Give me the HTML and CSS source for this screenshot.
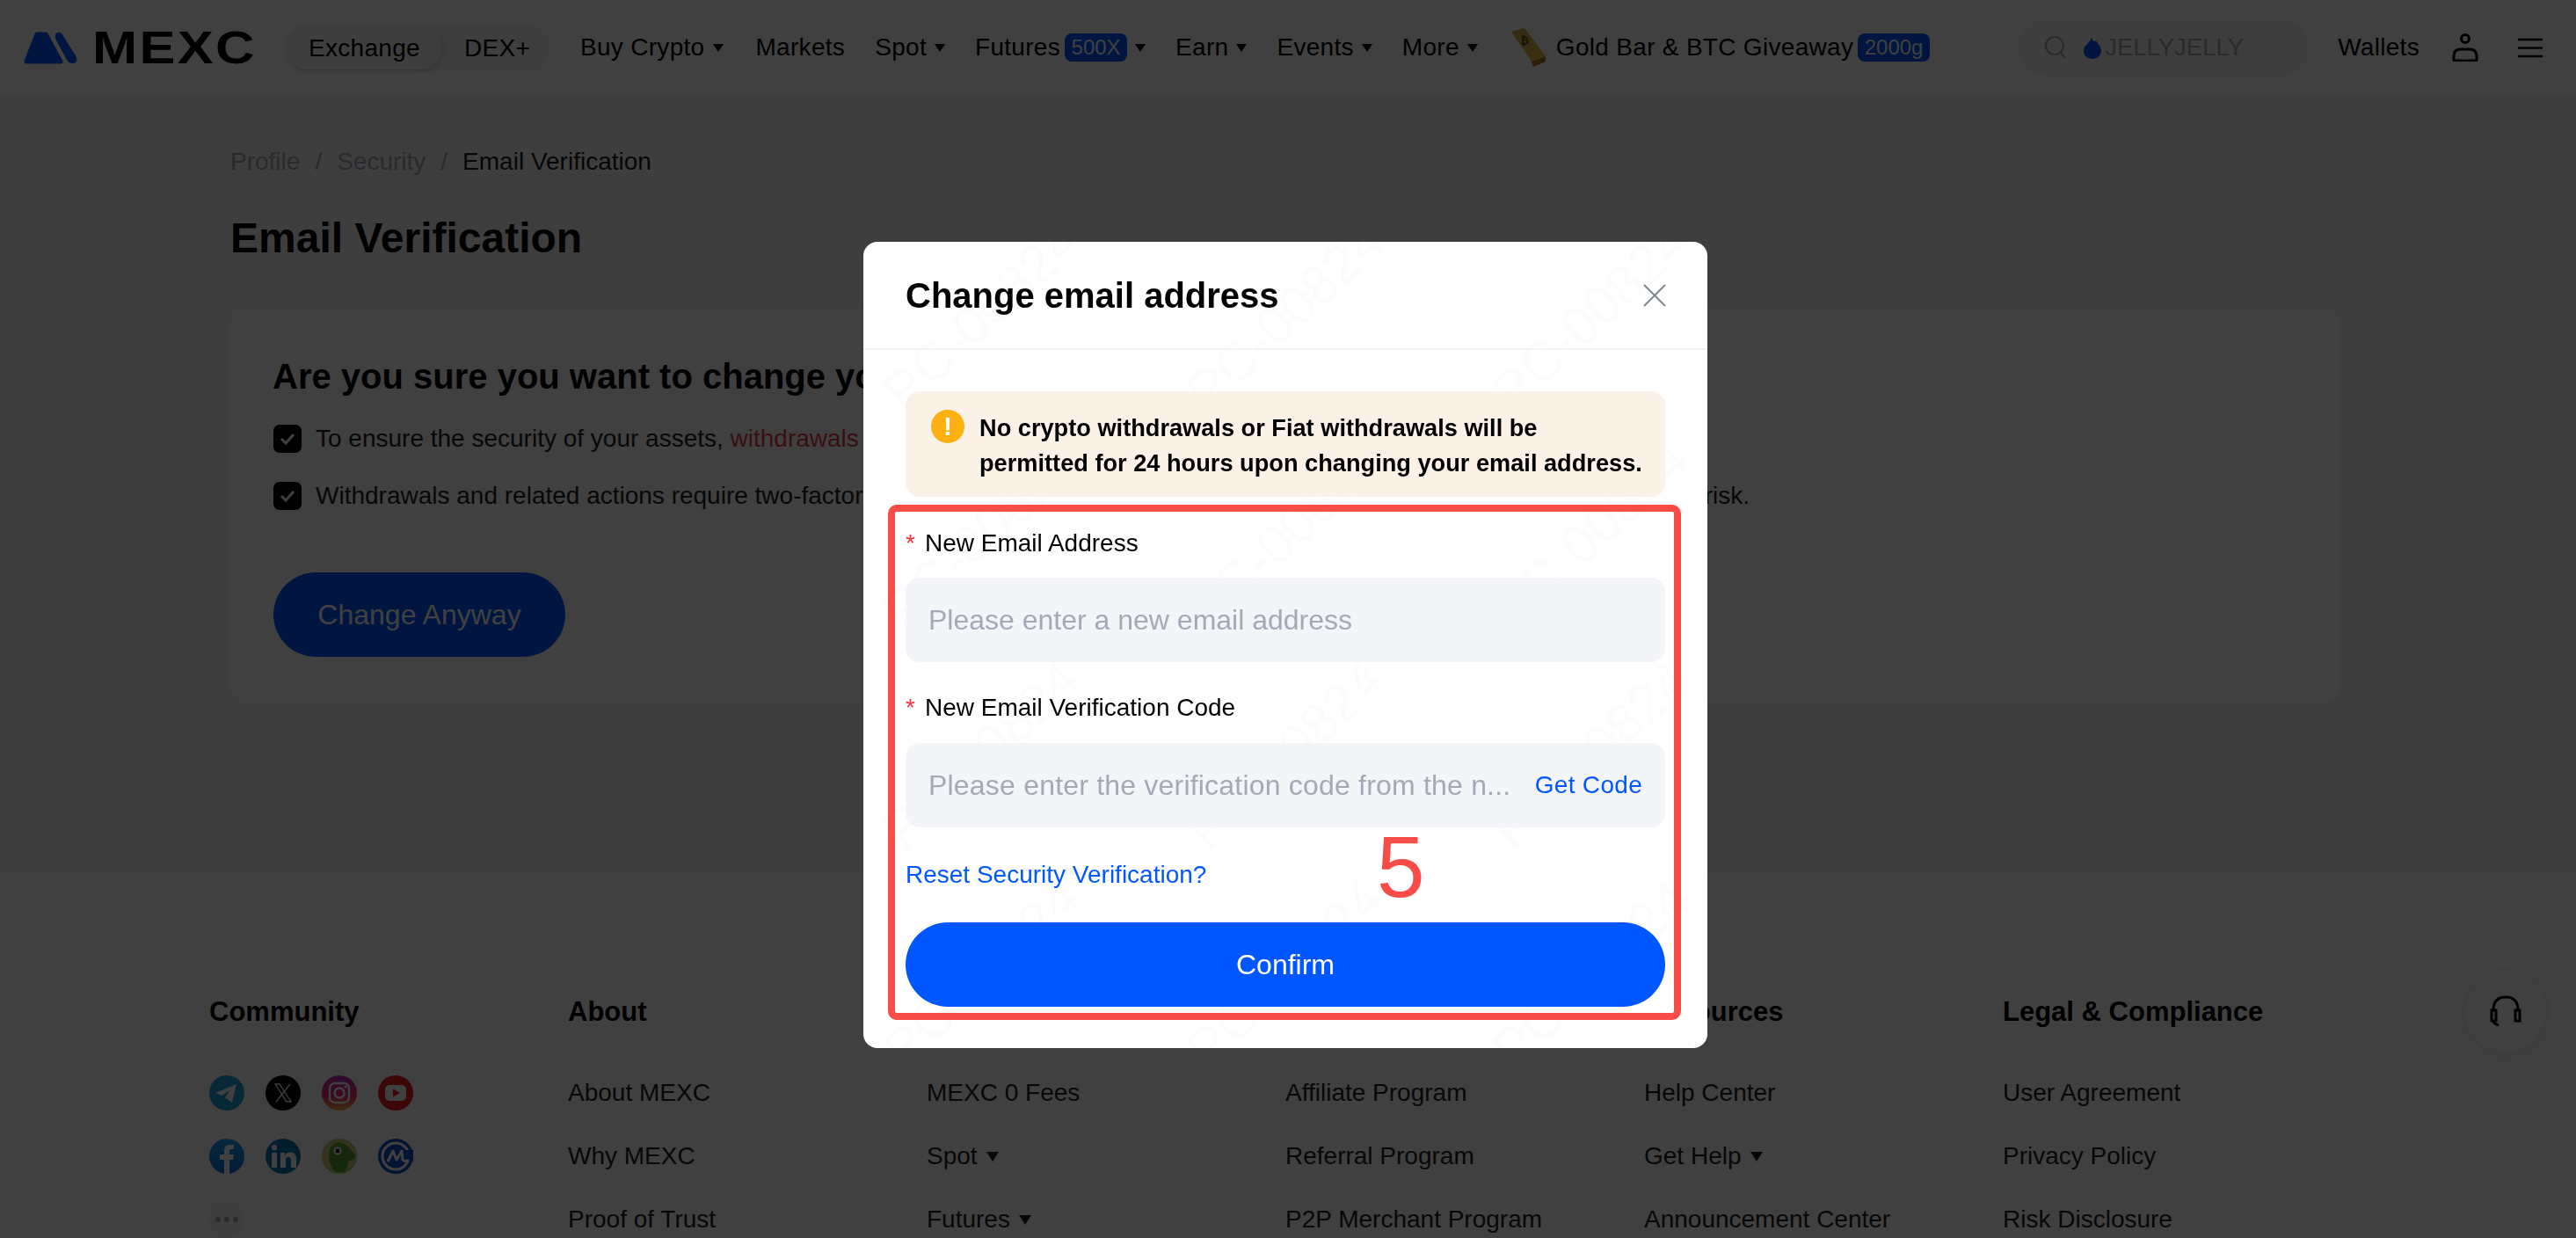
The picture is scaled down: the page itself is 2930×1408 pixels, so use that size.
FILE: index.html
```html
<!DOCTYPE html>
<html lang="en">
<head>
  <meta charset="UTF-8">
  <meta name="viewport" content="width=device-width, initial-scale=1.0">
  <title>Email Verification</title>
  <link rel="stylesheet" href="styles.css">
</head>
<body>
  <header class="topbar">
    <div class="logo">
      <svg class="logo-mark" viewBox="0 0 62 38">
        <path d="M4 35 L16 4 H26 L43 35 Z" fill="#0056ff" stroke="#0056ff" stroke-width="5" stroke-linejoin="round"/>
        <path d="M37 4 Q40 0 44 3 L61 30 Q63 37 56 37 Q52 37 50 33 L37 9 Z" fill="#0056ff"/>
      </svg>
      <span class="logo-text">MEXC</span>
    </div>
    <div class="mode-switch">
      <span class="mode active">Exchange</span>
      <span class="mode">DEX+</span>
    </div>
    <nav class="nav">
      <a>Buy Crypto<i class="caret"></i></a>
      <a>Markets</a>
      <a>Spot<i class="caret"></i></a>
      <a>Futures<b class="tag">500X</b><i class="caret"></i></a>
      <a>Earn<i class="caret"></i></a>
      <a>Events<i class="caret"></i></a>
      <a>More<i class="caret"></i></a>
      <a class="promo">
        <svg class="gold-bar" viewBox="0 0 42 44">
          <defs>
            <linearGradient id="gold" x1="0" y1="0" x2="0" y2="1">
              <stop offset="0" stop-color="#c9a94e"/>
              <stop offset="1" stop-color="#f0c040"/>
            </linearGradient>
          </defs>
          <path d="M1 4 L16 0 L40 32 L24 38 Z" fill="url(#gold)"/>
          <path d="M24 38 L40 32 L40 38 L26 44 Z" fill="#a87a1c"/>
          <text x="12" y="18" font-size="13" font-weight="700" fill="#5b4210" font-family="DejaVu Sans">₿</text>
        </svg>
        Gold Bar &amp; BTC Giveaway<b class="tag">2000g</b>
      </a>
    </nav>
    <div class="search">
      <svg class="search-icon" viewBox="0 0 24 26" fill="none" stroke="#a5a9b5" stroke-width="2">
        <circle cx="11" cy="11" r="10"/>
        <path d="M18 19 L23 25"/>
      </svg>
      <svg class="flame" viewBox="0 0 20 25"><path d="M9 0 C10 5 12 6 14 4 C15 7 20 10 20 16 C20 21 15 25 10 25 C4 25 0 21 0 16 C0 9 8 7 9 0 Z" fill="#0056ff"/></svg>
      <span>JELLYJELLY</span>
    </div>
    <a class="wallets">Wallets</a>
    <svg class="user-icon" viewBox="0 0 30 32" fill="none" stroke="#000" stroke-width="3">
      <circle cx="15" cy="6" r="4.5"/>
      <path d="M2 31 V26 Q2 18 10 18 H20 Q28 18 28 26 V31 Z"/>
    </svg>
    <svg class="menu-icon" viewBox="0 0 28 23" stroke="#000" stroke-width="2.5">
      <path d="M0 2 H28 M0 11.5 H28 M0 21 H28"/>
    </svg>
  </header>

  <main class="main">
    <div class="breadcrumb">
      <span>Profile</span><em>/</em><span>Security</span><em>/</em><strong>Email Verification</strong>
    </div>
    <h1>Email Verification</h1>
    <section class="card">
      <h2>Are you sure you want to change your email address?</h2>
      <div class="check-row">
        <i class="check"><svg viewBox="0 0 32 32"><path d="M9 16 L14 21 L23 11" fill="none" stroke="#fff" stroke-width="3"/></svg></i>
        <p>To ensure the security of your assets, <span class="danger">withdrawals</span></p>
      </div>
      <div class="check-row">
        <i class="check"><svg viewBox="0 0 32 32"><path d="M9 16 L14 21 L23 11" fill="none" stroke="#fff" stroke-width="3"/></svg></i>
        <p>Withdrawals and related actions require two-factor authentication. Removing or changing it may put your account and assets at risk.</p>
      </div>
      <button class="btn-change">Change Anyway</button>
    </section>
  </main>

  <footer class="footer">
    <div class="footer-col">
      <h3>Community</h3>
      <div class="socials">
        <svg viewBox="0 0 40 40"><circle cx="20" cy="20" r="20" fill="#1c9ed8"/><path d="M7 20 L31 10 L26 31 L18 25 L24 17 L14 23 Z" fill="#fff"/></svg>
        <svg viewBox="0 0 40 40"><circle cx="20" cy="20" r="20" fill="#000"/><path d="M11 10 H16 L29 30 H24 Z M28 10 L12 30" fill="none" stroke="#fff" stroke-width="1.3"/></svg>
        <svg viewBox="0 0 40 40"><defs><linearGradient id="ig" x1="0" y1="0" x2="0" y2="1"><stop offset="0" stop-color="#b92dc8"/><stop offset=".6" stop-color="#ee2a6b"/><stop offset="1" stop-color="#fcb045"/></linearGradient></defs><circle cx="20" cy="20" r="20" fill="url(#ig)"/><rect x="9" y="9" width="22" height="22" rx="6" fill="none" stroke="#fff" stroke-width="2.4"/><circle cx="20" cy="20" r="5.5" fill="none" stroke="#fff" stroke-width="2.4"/><circle cx="27" cy="13" r="1.6" fill="#fff"/></svg>
        <svg viewBox="0 0 40 40"><circle cx="20" cy="20" r="20" fill="#ec1c1c"/><rect x="8" y="11" width="24" height="18" rx="5" fill="#fff"/><path d="M17 15.5 L25 20 L17 24.5 Z" fill="#ec1c1c"/></svg>
        <svg viewBox="0 0 40 40"><defs><linearGradient id="fb" x1="0" y1="0" x2="0" y2="1"><stop offset="0" stop-color="#1ea0f2"/><stop offset="1" stop-color="#0a66e0"/></linearGradient></defs><circle cx="20" cy="20" r="20" fill="url(#fb)"/><path d="M17 40 V24 H12 V18 H17 V13 Q17 7 24 7 H28 V12 H25 Q23 12 23 14 V18 H28 L27 24 H23 V40 Z" fill="#fff"/></svg>
        <svg viewBox="0 0 40 40"><circle cx="20" cy="20" r="20" fill="#0a79b5"/><circle cx="10" cy="10" r="3.2" fill="#fff"/><path d="M7 16 H13 V33 H7 Z M17 16 H22 V19 Q24 15.500 28 15.500 Q35 15.500 35 23 V33 H29 V24 Q29 21 26 21 Q23 21 23 24 V33 H17 Z" fill="#fff"/></svg>
        <svg viewBox="0 0 40 40"><circle cx="20" cy="20" r="19" fill="#d9c77d" stroke="#a9cf6c" stroke-width="2"/><path d="M26 38 Q31 30 30 25 Q38 25 38 18 L33 13 Q27 4 18 4 Q9 6 8 18 Q7 30 16 38 Z" fill="#5aa02c"/><circle cx="18" cy="14" r="4.500" fill="#fff"/><circle cx="18" cy="14" r="2.500" fill="#222"/></svg>
        <svg viewBox="0 0 40 40"><circle cx="20" cy="20" r="20" fill="#0a52c9"/><circle cx="20" cy="20" r="15" fill="none" stroke="#fff" stroke-width="3"/><rect x="30" y="13" width="10" height="13" fill="#0a52c9"/><path d="M11 26 L17 14 L21 24 L27 14 L28 24 Q30 27 35 24" fill="none" stroke="#fff" stroke-width="3" stroke-linejoin="round"/></svg>
        <span class="more-dots"><i></i><i></i><i></i></span>
      </div>
    </div>
    <div class="footer-col">
      <h3>About</h3>
      <a>About MEXC</a>
      <a>Why MEXC</a>
      <a>Proof of Trust</a>
    </div>
    <div class="footer-col">
      <h3>Services</h3>
      <a>MEXC 0 Fees</a>
      <a>Spot<i class="caret"></i></a>
      <a>Futures<i class="caret"></i></a>
    </div>
    <div class="footer-col">
      <h3>Business</h3>
      <a>Affiliate Program</a>
      <a>Referral Program</a>
      <a>P2P Merchant Program</a>
    </div>
    <div class="footer-col">
      <h3>Resources</h3>
      <a>Help Center</a>
      <a>Get Help<i class="caret"></i></a>
      <a>Announcement Center</a>
    </div>
    <div class="footer-col">
      <h3>Legal &amp; Compliance</h3>
      <a>User Agreement</a>
      <a>Privacy Policy</a>
      <a>Risk Disclosure</a>
    </div>
  </footer>

  <div class="support">
    <svg viewBox="0 0 38 36" fill="none" stroke="#000" stroke-width="3">
      <path d="M5 20 V17 Q5 2 19 2 Q33 2 33 17 V20"/>
      <rect x="3" y="17" width="5" height="12" fill="#fff"/>
      <rect x="30" y="17" width="5" height="12" fill="#fff"/>
      <path d="M5 29 Q5 32 11 34"/>
    </svg>
  </div>

  <!-- Modal -->
  <div class="overlay">
    <div class="modal">
      <div class="watermark" aria-hidden="true">
        <span></span><span></span><span></span>
        <span></span><span></span><span></span>
        <span></span><span></span><span></span>
        <span></span><span></span><span></span>
      </div>
      <div class="modal-head">
        <h2>Change email address</h2>
        <svg class="close" viewBox="0 0 26 26" stroke="#7d8694" stroke-width="2"><path d="M1 1 L25 25 M25 1 L1 25"/></svg>
      </div>
      <div class="modal-body">
        <div class="alert">
          <span class="alert-icon">!</span>
          <p>No crypto withdrawals or Fiat withdrawals will be permitted for 24 hours upon changing your email address.</p>
        </div>
        <label class="field-label"><span>*</span>New Email Address</label>
        <div class="input"><span class="placeholder">Please enter a new email address</span></div>
        <label class="field-label second"><span>*</span>New Email Verification Code</label>
        <div class="input">
          <span class="placeholder long">Please enter the verification code from the n...</span>
          <a class="get-code">Get Code</a>
        </div>
        <a class="reset-link">Reset Security Verification?</a>
        <button class="btn-confirm">Confirm</button>
      </div>
      <!-- Annotation on top of the form -->
      <div class="mark-box"></div>
      <div class="mark-number">5</div>
    </div>
  </div>
</body>
</html>
```

FILE: styles.css
```css
/* General Styles */
html, body {
  height: 100%;
  overflow: hidden;
}

body {
  margin: 0;
  font-family: 'Liberation Sans', Arial, sans-serif;
  font-size: 28px;
  color: #000;
  background: #fff;
}

a {
  color: inherit;
  text-decoration: none;
}

.caret {
  display: inline-block;
  width: 0;
  height: 0;
  margin-left: 9px;
  border-left: 6.5px solid transparent;
  border-right: 6.5px solid transparent;
  border-top: 9px solid #000;
  vertical-align: 4px;
}

/* Top Bar */
.topbar {
  display: flex;
  align-items: center;
  height: 108px;
  padding: 0 38px 0 26px;
  background: #fff;
  letter-spacing: 0.3px;
}

.logo {
  display: flex;
  align-items: center;
  gap: 17px;
}

.logo-mark {
  width: 62px;
  height: 38px;
}

.logo-text {
  width: 185px;
  font-size: 52px;
  line-height: 38px;
  font-weight: 700;
  letter-spacing: 2px;
  transform: scaleX(1.18);
  transform-origin: left;
}

.mode-switch {
  display: flex;
  align-items: center;
  width: 299px;
  height: 55px;
  margin-left: 36px;
  border-radius: 28px;
  background: #f5f6f8;
}

.mode {
  padding: 0 25px;
  line-height: 49px;
  border-radius: 25px;
}

.mode.active {
  background: #f5f6f8;
  box-shadow: 0 2px 6px rgba(0, 0, 0, 0.15);
}

.nav {
  display: flex;
  align-items: center;
  gap: 34px;
  margin-left: 35px;
}

.nav a {
  display: flex;
  align-items: center;
}

.nav a:first-child {
  margin-right: 3px;
}

.tag {
  margin-left: 5px;
  padding: 0 7.5px;
  height: 32px;
  line-height: 32px;
  border-radius: 8px;
  background: #0056ff;
  color: #fff;
  font-size: 24px;
  font-weight: 400;
  letter-spacing: 0;
}

.promo {
  margin-left: 3px;
}

.gold-bar {
  width: 42px;
  height: 44px;
  margin-right: 10px;
}

.search {
  display: flex;
  align-items: center;
  width: 331px;
  height: 63px;
  box-sizing: border-box;
  margin-left: auto;
  padding-left: 31px;
  border-radius: 32px;
  background: #f5f6f8;
  color: #a5a9b5;
  letter-spacing: 0;
}

.search span {
  font-size: 27.5px;
}

.search-icon {
  width: 24px;
  height: 26px;
  margin-right: 20px;
}

.flame {
  width: 20px;
  height: 25px;
  margin-right: 4px;
}

.wallets {
  margin-left: 33px;
}

.user-icon {
  width: 30px;
  height: 32px;
  margin-left: 37px;
}

.menu-icon {
  width: 28px;
  height: 23px;
  margin-left: 45px;
}

/* Page */
.main {
  box-sizing: border-box;
  height: 886px;
  padding: 56px 268px 0 262px;
  background: #f7f8fa;
}

.breadcrumb {
  display: flex;
  line-height: 40px;
  color: #a5a9b5;
}

.breadcrumb em {
  margin: 0 17px;
  font-style: normal;
}

.breadcrumb strong {
  color: #1a1a1a;
  font-weight: 400;
}

h1 {
  margin: 33px 0 0;
  font-size: 48px;
  line-height: 68px;
}

.card {
  height: 448px;
  box-sizing: border-box;
  margin-top: 45px;
  padding: 50px 48px 0;
  border-radius: 16px;
  background: #fff;
}

.card h2 {
  margin: 0 0 23px;
  font-size: 40px;
  line-height: 56px;
}

.check-row {
  display: flex;
  align-items: center;
  gap: 16px;
  height: 40px;
  margin-bottom: 25px;
  color: #222;
}

.check-row p {
  margin: 0;
  white-space: nowrap;
}

.check {
  width: 32px;
  height: 32px;
  margin-left: 1px;
  border-radius: 7px;
  background: #000;
}

.check svg {
  display: block;
}

.danger {
  color: #e23b4a;
}

.btn-change {
  display: block;
  width: 332px;
  height: 96px;
  margin: 67px 0 0 1px;
  border: none;
  border-radius: 48px;
  background: #0056ff;
  color: #fff;
  font: inherit;
  font-size: 32px;
}

/* Footer */
.footer {
  display: grid;
  grid-template-columns: repeat(6, 408px);
  padding: 137px 0 0 238px;
  background: #fff;
}

.footer-col {
  display: flex;
  flex-direction: column;
  align-items: flex-start;
  gap: 32px;
}

.footer-col h3 {
  margin: 0 0 20px;
  font-size: 31px;
  line-height: 40px;
  font-weight: 700;
}

.footer-col a {
  line-height: 40px;
  color: #222;
  white-space: nowrap;
}

.footer-col .caret {
  margin-left: 10px;
  border-left-width: 7px;
  border-right-width: 7px;
  border-top: 11px solid #222;
  vertical-align: 3px;
}

.socials {
  display: grid;
  grid-template-columns: repeat(4, 40px);
  gap: 32px 24px;
}

.socials svg {
  display: block;
  width: 40px;
  height: 40px;
}

.more-dots {
  display: flex;
  align-items: center;
  justify-content: center;
  gap: 4px;
  width: 40px;
  height: 40px;
  border-radius: 50%;
  background: #f5f6f8;
}

.more-dots i {
  width: 6px;
  height: 6px;
  border-radius: 50%;
  background: #a5a9b5;
}

.support {
  position: absolute;
  top: 1103px;
  left: 2803px;
  display: flex;
  align-items: center;
  justify-content: center;
  width: 94px;
  height: 94px;
  border-radius: 50%;
  background: #fff;
  box-shadow: 0 0 0 1px #ebecf0, 0 4px 12px rgba(0, 0, 0, 0.06);
}

.support svg {
  width: 38px;
  height: 36px;
}

/* Modal */
.overlay {
  position: fixed;
  inset: 0;
  display: flex;
  justify-content: center;
  align-items: flex-start;
  box-sizing: border-box;
  padding: 275px 6px 0 0;
  background: rgba(0, 0, 0, 0.75);
}

.modal {
  position: relative;
  width: 960px;
  height: 917px;
  border-radius: 16px;
  background: #fff;
  overflow: hidden;
}

.watermark {
  position: absolute;
  inset: -40px;
  display: grid;
  grid-template-columns: repeat(3, 1fr);
  grid-template-rows: repeat(4, 1fr);
  place-items: center;
  pointer-events: none;
}

.watermark span {
  transform: rotate(-43deg);
  font-size: 62px;
  color: rgba(0, 0, 0, 0.012);
}

.watermark span::before {
  content: "PC-00824";
}

.modal-head {
  position: relative;
  display: flex;
  align-items: center;
  justify-content: space-between;
  height: 120px;
  box-sizing: content-box;
  padding: 2px 48px 0;
  margin-top: -1px;
  border-bottom: 2px solid #f2f3f8;
}

.modal-head h2 {
  margin: 0;
  font-size: 40px;
}

.close {
  width: 26px;
  height: 26px;
  margin-right: -1px;
}

.modal-body {
  position: relative;
  padding: 47px 48px 0;
}

.alert {
  display: flex;
  gap: 17px;
  height: 120px;
  box-sizing: border-box;
  padding: 22px 20px 0 29px;
  border-radius: 16px;
  background: #fcf1e7;
}

.alert p {
  margin: 0;
  font-size: 27.2px;
  font-weight: 700;
  line-height: 40px;
}

.alert-icon {
  flex: none;
  width: 38px;
  height: 38px;
  margin-top: -1px;
  border-radius: 50%;
  background: #fdb011;
  color: #fff;
  font-size: 30px;
  font-weight: 700;
  line-height: 38px;
  text-align: center;
}

.field-label {
  display: block;
  margin-top: 33px;
  margin-bottom: 19px;
  line-height: 40px;
}

.field-label.second {
  margin-top: 32px;
  margin-bottom: 20px;
}

.field-label span {
  margin-right: 11px;
  color: #f5333f;
}

.input {
  display: flex;
  align-items: center;
  justify-content: space-between;
  height: 96px;
  box-sizing: border-box;
  padding: 0 26px;
  border-radius: 16px;
  background: #f4f5f9;
}

.placeholder {
  font-size: 32px;
  color: #a5a9b5;
  white-space: nowrap;
}

.placeholder.long {
  letter-spacing: 0.2px;
}

.get-code {
  color: #0056ff;
  letter-spacing: 0.3px;
}

.reset-link {
  display: block;
  margin-top: 34px;
  line-height: 40px;
  color: #0056ff;
}

.btn-confirm {
  display: block;
  width: 100%;
  height: 96px;
  margin-top: 34px;
  border: none;
  border-radius: 48px;
  background: #0056ff;
  color: #fff;
  font: inherit;
  font-size: 32px;
}

.mark-box {
  position: absolute;
  top: 299px;
  left: 28px;
  width: 886px;
  height: 570px;
  border: 8px solid #f84c48;
  border-radius: 10px;
}

.mark-number {
  position: absolute;
  top: 661px;
  left: 584px;
  font-size: 98px;
  line-height: 100px;
  color: #f84c48;
}
```
